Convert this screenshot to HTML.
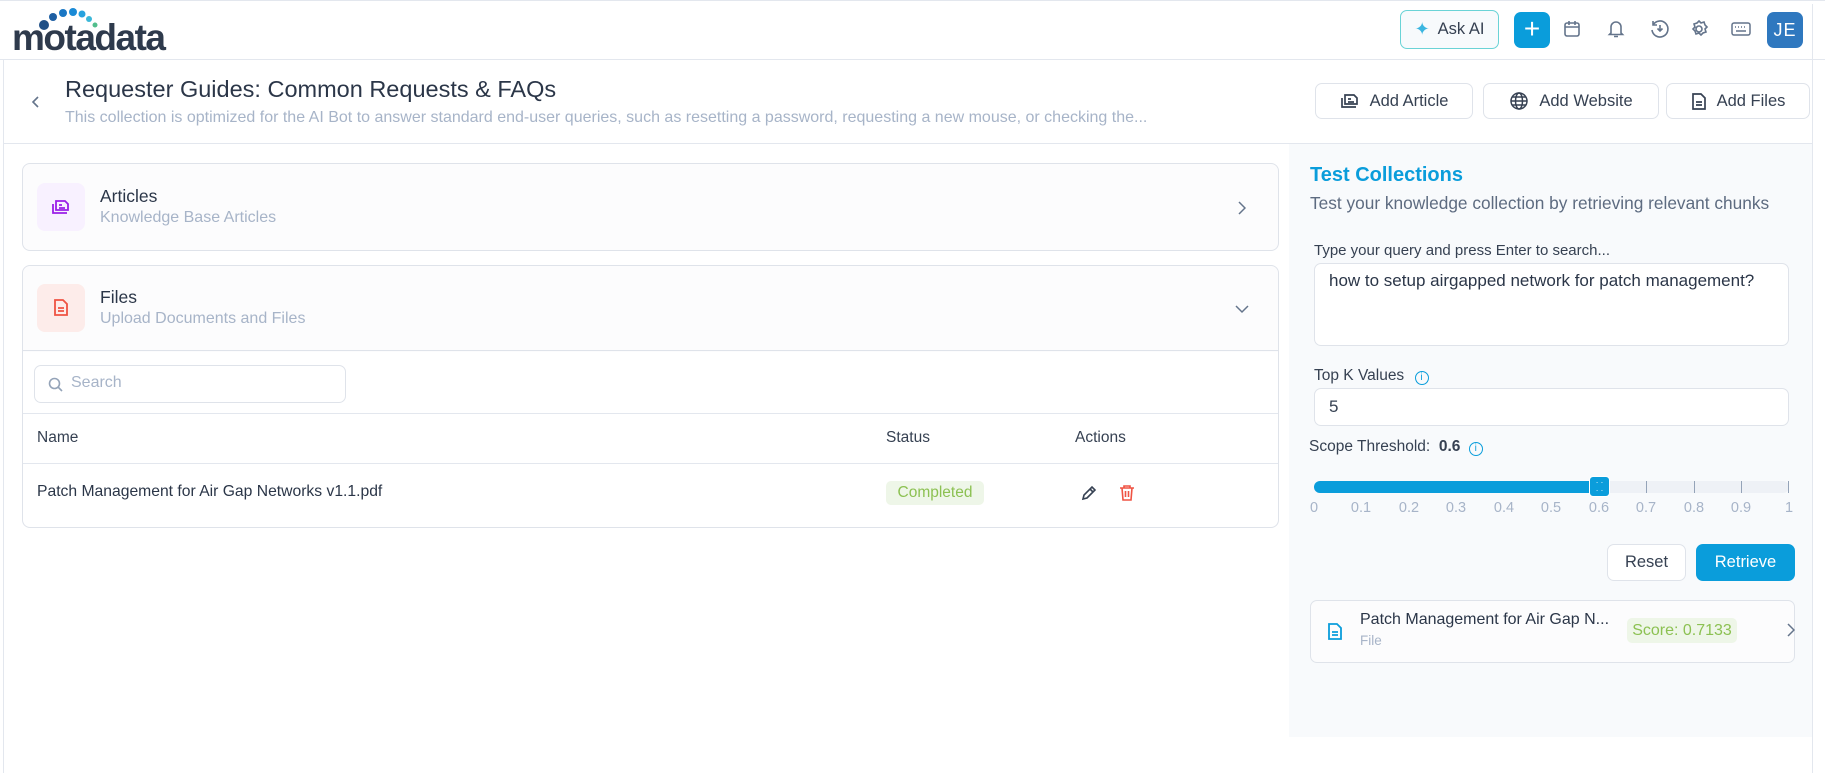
<!DOCTYPE html>
<html><head><meta charset="utf-8"><style>
*{box-sizing:border-box;margin:0;padding:0}
body{width:1825px;height:773px;background:#fff;font-family:"Liberation Sans",sans-serif;color:#364152;position:relative;overflow:hidden}
.a{position:absolute}
.btn{position:absolute;border:1px solid #dfe3ea;border-radius:7px;background:#fff;font-size:16.5px;color:#364152;display:flex;align-items:center;justify-content:center;gap:10px}
.card{position:absolute;border:1px solid #dfe3ea;border-radius:8px;background:#fcfcfd}
.lb{position:absolute;top:0;transform:translateX(-50%)}
</style></head><body>
<div class="a" style="left:0;top:0;width:1825px;height:1px;background:#e3e7ee"></div>
<div class="a" style="left:12px;top:17px;font-size:37px;font-weight:bold;color:#2e3a4c;letter-spacing:-1.5px">motadata</div>
<svg class="a" style="left:38px;top:8px" width="70" height="24"><circle cx="6" cy="17" r="5" fill="#1f4f86"/><circle cx="15" cy="9" r="4" fill="#1e5fa3"/><circle cx="25" cy="5" r="4" fill="#1a77c4"/><circle cx="35" cy="4" r="4" fill="#1a8ad6"/><circle cx="44" cy="6" r="3.5" fill="#27a2de"/><circle cx="51" cy="11" r="3" fill="#3bb7d8"/><circle cx="57" cy="17" r="2.5" fill="#52be8c"/></svg>
<div class="a" style="left:0;top:59px;width:1825px;height:1px;background:#e3e7ee"></div>
<div class="btn" style="left:1400px;top:10px;width:99px;height:39px;border-color:#6ad3d6;background:#f7fafc;gap:8px"><span style="color:#3bb6e0;font-size:18px">✦</span>Ask AI</div>
<div class="a" style="left:1514px;top:12px;width:36px;height:36px;border-radius:7px;background:#0a9ddb;color:#fff;font-size:28px;line-height:34px;text-align:center">+</div>
<svg class="a" style="left:1563px;top:20px" width="18" height="18" fill="none" stroke="#64748b" stroke-width="1.6"><rect x="2" y="3" width="14" height="13" rx="2"/><path d="M2 7h14M6 1v4M12 1v4"/></svg>
<svg class="a" style="left:1607px;top:19px" width="18" height="20" fill="none" stroke="#64748b" stroke-width="1.6"><path d="M4 14V8a5 5 0 0110 0v6l1.5 1.5h-13zM7 17.5h4"/></svg>
<svg class="a" style="left:1650px;top:19px" width="20" height="20" fill="none" stroke="#64748b" stroke-width="1.6"><path d="M3 6a8 8 0 11-1 5M3 2v4h4M10 6v6M7.5 9.5L10 12l2.5-2.5"/></svg>
<svg class="a" style="left:1689px;top:19px" width="20" height="20" fill="none" stroke="#64748b" stroke-width="1.6"><circle cx="10" cy="10" r="3"/><path d="M10 2l2 2 3-1 1 3 2 2-2 2 1 3-3 1-2 2-2-2-3 1-1-3-2-2 2-2-1-3 3-1z"/></svg>
<svg class="a" style="left:1731px;top:22px" width="20" height="14" fill="none" stroke="#64748b" stroke-width="1.5"><rect x="1" y="1" width="18" height="12" rx="2"/><path d="M4 5h1M7 5h1M10 5h1M13 5h1M5 9h10"/></svg>
<div class="a" style="left:1767px;top:12px;width:36px;height:36px;border-radius:7px;background:#2f78bf;color:#fff;font-size:18px;line-height:36px;text-align:center;letter-spacing:1px">JE</div>
<div class="a" style="left:3px;top:60px;width:1px;height:713px;background:#e3e7ee"></div>
<div class="a" style="left:1812px;top:4px;width:1px;height:769px;background:#e3e7ee"></div>
<svg class="a" style="left:31px;top:95px" width="10" height="14" fill="none" stroke="#64748b" stroke-width="1.6"><path d="M7 2L2 7l5 5"/></svg>
<div class="a" style="left:65px;top:76px;font-size:23.5px;color:#2b3648">Requester Guides: Common Requests &amp; FAQs</div>
<div class="a" style="left:65px;top:109px;font-size:16px;color:#a7b4c8">This collection is optimized for the AI Bot to answer standard end-user queries, such as resetting a password, requesting a new mouse, or checking the...</div>
<div class="btn" style="left:1315px;top:83px;width:158px;height:36px"><svg width="20" height="18" fill="none" stroke="#364152" stroke-width="1.7"><path d="M2 6v9h14M5 3h9l3 3v6H5zM8 7h3M8 10h6"/></svg>Add Article</div>
<div class="btn" style="left:1483px;top:83px;width:176px;height:36px"><svg width="20" height="20" fill="none" stroke="#364152" stroke-width="1.5"><circle cx="10" cy="10" r="8"/><ellipse cx="10" cy="10" rx="3.5" ry="8"/><path d="M2 10h16M3.5 6h13M3.5 14h13"/></svg>Add Website</div>
<div class="btn" style="left:1666px;top:83px;width:144px;height:36px"><svg width="16" height="19" fill="none" stroke="#364152" stroke-width="1.7"><path d="M2 2h8l4 4v11H2zM5 10h6M5 13h6"/></svg>Add Files</div>
<div class="a" style="left:3px;top:143px;width:1809px;height:1px;background:#e3e7ee"></div>
<div class="a" style="left:1289px;top:144px;width:523px;height:593px;background:#f8fafc"></div>
<div class="a" style="left:1310px;top:164px;font-size:20px;color:#0a9ddb;font-weight:bold">Test Collections</div>
<div class="a" style="left:1310px;top:193px;font-size:17.3px;color:#5d6b80">Test your knowledge collection by retrieving relevant chunks</div>
<div class="a" style="left:1314px;top:242px;font-size:15px;color:#364152">Type your query and press Enter to search...</div>
<div class="a" style="left:1314px;top:263px;width:475px;height:83px;border:1px solid #dfe3ea;border-radius:7px;background:#fff;padding:7px 14px;font-size:17px;color:#2b3648">how to setup airgapped network for patch management?</div>
<div class="a" style="left:1314px;top:367px;font-size:15.5px">Top K Values <span style="color:#0a9ddb;border:1.5px solid #0a9ddb;border-radius:50%;display:inline-block;width:14px;height:14px;font-size:10px;text-align:center;line-height:12px;margin-left:6px">i</span></div>
<div class="a" style="left:1314px;top:388px;width:475px;height:38px;border:1px solid #dfe3ea;border-radius:7px;background:#fff;padding:0 14px;font-size:17px;line-height:36px">5</div>
<div class="a" style="left:1309px;top:438px;font-size:15.5px">Scope Threshold: &nbsp;<b>0.6</b> <span style="color:#0a9ddb;border:1.5px solid #0a9ddb;border-radius:50%;display:inline-block;width:14px;height:14px;font-size:10px;text-align:center;line-height:12px;margin-left:4px">i</span></div>
<div class="a" style="left:1314px;top:481px;width:475px;height:12px;background:#eef1f6;border-radius:6px"></div>
<div class="a" style="left:1314px;top:481px;width:285px;height:12px;background:#0a9ddb;border-radius:6px 0 0 6px"></div>
<div class="a" style="left:1646px;top:481px;width:1px;height:12px;background:#94a3b8"></div>
<div class="a" style="left:1694px;top:481px;width:1px;height:12px;background:#94a3b8"></div>
<div class="a" style="left:1741px;top:481px;width:1px;height:12px;background:#94a3b8"></div>
<div class="a" style="left:1788px;top:481px;width:1px;height:12px;background:#94a3b8"></div>
<div class="a" style="left:1589px;top:476px;width:21px;height:21px;background:#0a9ddb;border:1.5px solid #fff;border-radius:4px;color:#fff;font-size:8px;line-height:8px;text-align:center;padding-top:2px">· ·<br>· ·</div>
<div class="a" style="left:0;top:500px;width:1825px;height:20px;font-size:14.5px;color:#a7b4c8">
<span class="lb" style="left:1314px">0</span><span class="lb" style="left:1361px">0.1</span><span class="lb" style="left:1409px">0.2</span><span class="lb" style="left:1456px">0.3</span><span class="lb" style="left:1504px">0.4</span><span class="lb" style="left:1551px">0.5</span><span class="lb" style="left:1599px">0.6</span><span class="lb" style="left:1646px">0.7</span><span class="lb" style="left:1694px">0.8</span><span class="lb" style="left:1741px">0.9</span><span class="lb" style="left:1789px">1</span></div>
<div class="btn" style="left:1607px;top:544px;width:79px;height:37px">Reset</div>
<div class="btn" style="left:1696px;top:544px;width:99px;height:37px;background:#0a9ddb;border-color:#0a9ddb;color:#fff">Retrieve</div>
<div class="a" style="left:1310px;top:600px;width:485px;height:63px;border:1px solid #dfe3ea;border-radius:7px;background:#fcfcfd"></div>
<svg class="a" style="left:1327px;top:622px" width="16" height="19" fill="none" stroke="#0a9ddb" stroke-width="1.8"><path d="M2 2h8l4 4v11H2zM5 10h6M5 13h6"/></svg>
<div class="a" style="left:1360px;top:611px;font-size:16px;color:#2b3648">Patch Management for Air Gap N...</div>
<div class="a" style="left:1360px;top:633px;font-size:13.5px;color:#a7b4c8">File</div>
<div class="a" style="left:1627px;top:618px;width:110px;height:25px;background:#eef6e8;border-radius:5px;color:#8cc152;font-size:16px;line-height:25px;text-align:center">Score: 0.7133</div>
<svg class="a" style="left:1786px;top:622px" width="9" height="16" fill="none" stroke="#64748b" stroke-width="1.5"><path d="M2 2l6 6-6 6"/></svg>
<div class="card" style="left:22px;top:163px;width:1257px;height:88px"></div>
<div class="a" style="left:37px;top:183px;width:48px;height:48px;border-radius:8px;background:#f8f1ff"></div>
<svg class="a" style="left:51px;top:198px" width="20" height="18" fill="none" stroke="#9b1fe8" stroke-width="1.8"><path d="M2 6v9h14M5 3h9l3 3v6H5zM8 7h3M8 10h6"/></svg>
<div class="a" style="left:100px;top:186px;font-size:17.5px;color:#2b3648">Articles</div>
<div class="a" style="left:100px;top:209px;font-size:16px;color:#a7b4c8">Knowledge Base Articles</div>
<svg class="a" style="left:1237px;top:200px" width="9" height="16" fill="none" stroke="#64748b" stroke-width="1.5"><path d="M2 2l6 6-6 6"/></svg>
<div class="card" style="left:22px;top:265px;width:1257px;height:263px"></div>
<div class="a" style="left:23px;top:266px;width:1255px;height:85px;background:#fcfcfd;border-bottom:1px solid #dfe3ea;border-radius:8px 8px 0 0"></div>
<div class="a" style="left:23px;top:352px;width:1255px;height:175px;background:#fff;border-radius:0 0 8px 8px"></div>
<div class="a" style="left:37px;top:284px;width:48px;height:48px;border-radius:8px;background:#fdecea"></div>
<svg class="a" style="left:53px;top:298px" width="16" height="19" fill="none" stroke="#ef5343" stroke-width="1.8"><path d="M2 2h8l4 4v11H2zM5 10h6M5 13h6"/></svg>
<div class="a" style="left:100px;top:287px;font-size:17.5px;color:#2b3648">Files</div>
<div class="a" style="left:100px;top:310px;font-size:16px;color:#a7b4c8">Upload Documents and Files</div>
<svg class="a" style="left:1234px;top:304px" width="16" height="10" fill="none" stroke="#64748b" stroke-width="1.5"><path d="M2 2l6 6 6-6"/></svg>
<div class="a" style="left:34px;top:365px;width:312px;height:38px;border:1px solid #dfe3ea;border-radius:7px;background:#fff"></div>
<svg class="a" style="left:48px;top:377px" width="15" height="15" fill="none" stroke="#94a3b8" stroke-width="1.6"><circle cx="6.5" cy="6.5" r="5"/><path d="M10 10l4 4"/></svg>
<div class="a" style="left:71px;top:374px;font-size:16px;color:#a7b4c8">Search</div>
<div class="a" style="left:23px;top:413px;width:1255px;height:1px;background:#e3e7ee"></div>
<div class="a" style="left:37px;top:429px;font-size:15.5px;color:#364152">Name</div>
<div class="a" style="left:886px;top:429px;font-size:15.5px;color:#364152">Status</div>
<div class="a" style="left:1075px;top:429px;font-size:15.5px;color:#364152">Actions</div>
<div class="a" style="left:23px;top:463px;width:1255px;height:1px;background:#e3e7ee"></div>
<div class="a" style="left:37px;top:483px;font-size:15.7px;color:#2b3648">Patch Management for Air Gap Networks v1.1.pdf</div>
<div class="a" style="left:886px;top:481px;width:98px;height:24px;background:#eef6e8;border-radius:5px;color:#8cc152;font-size:15.5px;line-height:24px;text-align:center">Completed</div>
<svg class="a" style="left:1081px;top:485px" width="16" height="16" fill="none" stroke="#364152" stroke-width="1.6"><path d="M2 14l1-4 8-8 3 3-8 8zM9 4l3 3"/></svg>
<svg class="a" style="left:1119px;top:484px" width="16" height="17" fill="none" stroke="#ef5343" stroke-width="1.6"><path d="M1 4h14M5 4V2h6v2M3 4l1 12h8l1-12M6.5 7v6M9.5 7v6"/></svg>
</body></html>
